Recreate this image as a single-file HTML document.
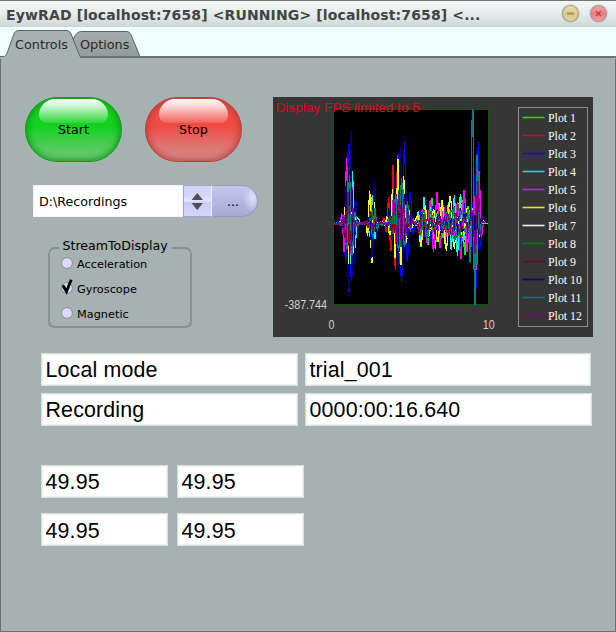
<!DOCTYPE html>
<html><head><meta charset="utf-8"><title>EywRAD</title>
<style>
html,body{margin:0;padding:0;}
body{width:616px;height:632px;position:relative;overflow:hidden;background:#a6b1b1;font-family:"DejaVu Sans","Liberation Sans",sans-serif;font-size:12px;color:#000;}
.abs{position:absolute;}
#titlebar{left:0;top:0;width:616px;height:27px;background:linear-gradient(#f4f6f6 0,#e6ecec 50%,#ccd6d6 100%);border-top:1px solid #6e7676;box-sizing:border-box;}
#title{left:6px;top:7px;letter-spacing:0.130px;font-weight:bold;font-size:14px;color:#444;white-space:nowrap;}
#tabstrip{left:0;top:27px;width:616px;height:29px;background:#f0fefe;}
#pane{left:0;top:56px;width:616px;height:576px;background:#a6b1b1;border:1px solid #6c7070;border-top:none;box-sizing:border-box;}
.tabtxt{font-size:12.800px;color:#2a2a2a;white-space:nowrap;}
.btn{border-radius:33px;box-sizing:border-box;}
.btn span{position:absolute;left:0;right:0;text-align:center;top:24px;font-size:12.67px;}
.fld{background:#fff;border:1px solid #dadfdf;box-shadow:inset 0 0 0 1px #eff2f2;box-sizing:border-box;font-family:"Liberation Sans",sans-serif;font-size:21.400px;line-height:32.600px;padding-left:3.500px;letter-spacing:0.150px;white-space:nowrap;overflow:hidden;}
</style></head><body>
<div id="titlebar" class="abs"></div>
<div id="title" class="abs">EywRAD [localhost:7658] &lt;RUNNING&gt; [localhost:7658] &lt;...</div>
<div id="tabstrip" class="abs"></div>
<div id="pane" class="abs"></div>
<svg class="abs" style="left:0;top:27px" width="616" height="32" viewBox="0 0 616 32">
  <defs><linearGradient id="tg" x1="0" y1="0" x2="0" y2="1"><stop offset="0" stop-color="#a4aeae"/><stop offset="1" stop-color="#929c9c"/></linearGradient></defs>
  <path d="M73,12 C76,7 77.500,4.500 82,4.500 L126,4.500 C129,4.500 130.500,6 131.500,9 L140,29.500 L78,29.500 Z" fill="url(#tg)" stroke="#5d6565" stroke-width="1"/>
  <path d="M0,29.500 L3,29.500 C5.500,29.500 6.500,28 7.500,25 L13.500,8 C14.500,5 16,3.500 19,3.500 L66,3.500 C69,3.500 70.500,5 71.500,8 L80,29.500 L616,29.500 L616,32 L0,32 Z" fill="#a6b1b1" stroke="none"/>
  <path d="M0,29.500 L3,29.500 C5.500,29.500 6.500,28 7.500,25 L13.500,8 C14.500,5 16,3.500 19,3.500 L66,3.500 C69,3.500 70.500,5 71.500,8 L80,29.500" fill="none" stroke="#5d6565" stroke-width="1"/>
  <rect x="80" y="29" width="536" height="2" fill="#6a7272"/>
</svg>
<div class="abs tabtxt" style="left:15px;top:37px">Controls</div>
<div class="abs tabtxt" style="left:80px;top:37px">Options</div>

<!-- window buttons -->
<svg class="abs" style="left:556px;top:1px" width="56" height="26" viewBox="0 0 56 26">
  <defs>
   <linearGradient id="gy" x1="0" y1="0" x2="0" y2="1"><stop offset="0" stop-color="#ecdfae"/><stop offset=".5" stop-color="#dcc98c"/><stop offset="1" stop-color="#e2d29c"/></linearGradient>
   <linearGradient id="gr" x1="0" y1="0" x2="0" y2="1"><stop offset="0" stop-color="#f4a8a8"/><stop offset=".5" stop-color="#ec7c80"/><stop offset="1" stop-color="#f0a0a0"/></linearGradient>
  </defs>
  <circle cx="14.500" cy="12.500" r="9.500" fill="#c4cccc" opacity=".6"/>
  <circle cx="14.500" cy="12.500" r="8" fill="url(#gy)" stroke="#a8a288" stroke-width="1.200"/>
  <rect x="11" y="11.500" width="7" height="2" fill="#a4945c"/>
  <circle cx="42.500" cy="12.500" r="9.500" fill="#c4cccc" opacity=".6"/>
  <circle cx="42.500" cy="12.500" r="8" fill="url(#gr)" stroke="#b09494" stroke-width="1.200"/>
  <path d="M40.200,10.200 L44.800,14.800 M44.800,10.200 L40.200,14.800" stroke="#b84850" stroke-width="1.600" fill="none"/>
</svg>

<!-- Start / Stop -->
<div class="abs btn" style="left:25px;top:97px;width:97px;height:65px;background:linear-gradient(#12d21f 0,#12d21f 45%,#4ccc56 75%,#74c878 100%);border:1px solid #0a9a14;box-shadow:inset 0 0 7px 1px #0a9414;">
  <div class="abs" style="left:13px;top:1px;width:69px;height:24px;border-radius:16px 16px 8px 8px;background:linear-gradient(rgba(255,255,255,.98) 0,rgba(255,255,255,.78) 30%,rgba(255,255,255,.12) 100%);"></div>
  <span>Start</span>
</div>
<div class="abs btn" style="left:145px;top:97px;width:97px;height:65px;background:linear-gradient(#f04c44 0,#f04c44 45%,#e07470 75%,#d48c88 100%);border:1px solid #b83c38;box-shadow:inset 0 0 7px 1px #b83c38;">
  <div class="abs" style="left:13px;top:1px;width:69px;height:24px;border-radius:16px 16px 8px 8px;background:linear-gradient(rgba(255,255,255,.98) 0,rgba(255,255,255,.78) 30%,rgba(255,255,255,.12) 100%);"></div>
  <span>Stop</span>
</div>

<!-- combo -->
<div class="abs" style="left:33px;top:185px;width:150px;height:32px;background:#fff;border:1px solid #f2f5f5;box-sizing:border-box;"></div>
<div class="abs" style="left:39px;top:194px;font-size:12.67px;">D:\Recordings</div>
<div class="abs" style="left:183px;top:185px;width:29px;height:32px;background:linear-gradient(#d2d2f6 0,#d6d6fa 35%,#e6e6ff 48%,#ccccf4 56%,#d6d6fa 100%);border:1px solid #a4a4d4;border-right:1px solid #ececff;box-sizing:border-box;"></div>
<svg class="abs" style="left:183px;top:185px" width="29" height="32" viewBox="0 0 29 32"><path d="M8.500,15 L14.200,8 L20,15 Z M8.500,18 L14.200,25 L20,18 Z" fill="#50505c"/></svg>
<div class="abs" style="left:212px;top:185px;width:46px;height:32px;border-radius:0 16px 16px 0;background:radial-gradient(ellipse 22% 45% at 90% 42%,rgba(226,226,255,.9) 0,rgba(226,226,255,0) 100%),linear-gradient(#c6c6ee 0,#b6b6e0 50%,#a8a8d2 100%);border:1px solid #9a9ac6;border-left:none;box-sizing:border-box;"></div>
<div class="abs" style="left:227px;top:194px;font-size:12.67px;">...</div>

<!-- group box -->
<div class="abs" style="left:48px;top:247px;width:144px;height:81px;border:2px solid #889292;border-radius:7px;box-sizing:border-box;"></div>
<div class="abs" style="left:58.500px;top:238px;padding:0 4px;background:#a6b1b1;font-size:12.600px;">StreamToDisplay</div>
<svg class="abs" style="left:58px;top:255px" width="20" height="70" viewBox="0 0 20 70">
  <circle cx="9" cy="8" r="5.400" fill="#dadaff" stroke="#8c8c98" stroke-width="1"/>
  <circle cx="9" cy="33" r="5.400" fill="#dadaff" stroke="#8c8c98" stroke-width="1"/>
  <circle cx="9" cy="58" r="5.400" fill="#dadaff" stroke="#8c8c98" stroke-width="1"/>
  <path d="M4.800,30.200 L8.500,36.500 L13.200,24.800" fill="none" stroke="#000" stroke-width="2.800"/>
</svg>
<div class="abs" style="left:77px;top:257.600px;font-size:11.300px;">Acceleration</div>
<div class="abs" style="left:77px;top:282.600px;font-size:11.300px;">Gyroscope</div>
<div class="abs" style="left:77px;top:307.600px;font-size:11.300px;">Magnetic</div>

<!-- chart -->
<div id="chart" class="abs" style="left:273px;top:97px;width:320px;height:240px;background:#363636;">
<svg width="320" height="240" viewBox="0 0 320 240" style="position:absolute;left:0;top:0">
  <rect x="60.500" y="12.500" width="155" height="195" fill="#000" stroke="#0a5a0a" stroke-width="1"/>
  <g id="waves" fill="none" stroke-width="1.25" stroke-linejoin="round" shape-rendering="crispEdges"><polyline points="61.0,127.4 61.5,125.8 62.0,125.0 62.5,125.9 63.0,127.2 63.5,126.2 64.0,127.1 64.5,127.5 65.0,126.5 65.5,126.2 66.0,126.2 66.5,126.3 67.0,124.8 67.5,125.3 68.0,126.8 68.5,127.3 69.0,126.6 69.5,126.8 70.0,126.4 70.5,127.7 71.0,123.0 71.5,119.9 72.0,120.4 72.5,119.4 73.0,125.6 73.5,130.2 74.0,139.3 74.5,143.2 75.0,139.4 75.5,131.7 76.0,120.3 76.5,108.9 77.0,103.8 77.5,107.2 78.0,115.9 78.5,130.3 79.0,139.7 79.5,141.2 80.0,140.3 80.5,133.4 81.0,125.0 81.5,121.3 82.0,120.4 82.5,121.5 83.0,123.9 83.5,124.9 84.0,127.2 84.5,128.5 85.0,126.3 85.5,127.5 86.0,125.8 86.5,127.0 87.0,125.1 87.5,126.4 88.0,127.4 88.5,127.0 89.0,126.9 89.5,126.1 90.0,127.1 90.5,127.4 91.0,126.1 91.5,126.0 92.0,125.2 92.5,127.6 93.0,126.5 93.5,127.2 94.0,126.0 94.5,126.1 95.0,123.9 95.5,124.1 96.0,125.8 96.5,127.7 97.0,128.8 97.5,133.9 98.0,134.6 98.5,133.9 99.0,129.7 99.5,121.0 100.0,114.9 100.5,112.4 101.0,116.0 101.5,120.4 102.0,128.0 102.5,131.0 103.0,132.6 103.5,131.2 104.0,129.9 104.5,125.3 105.0,124.8 105.5,124.6 106.0,125.7 106.5,127.0 107.0,127.3 107.5,126.3 108.0,125.8 108.5,126.1 109.0,127.1 109.5,127.1 110.0,127.4 110.5,125.6 111.0,126.7 111.5,126.7 112.0,126.3 112.5,124.0 113.0,123.2 113.5,123.8 114.0,125.7 114.5,125.4 115.0,127.3 115.5,130.1 116.0,130.8 116.5,131.5 117.0,129.0 117.5,127.0 118.0,119.8 118.5,116.7 119.0,111.2 119.5,111.7 120.0,117.3 120.5,126.4 121.0,132.6 121.5,138.0 122.0,143.4 122.5,141.6 123.0,136.4 123.5,127.3 124.0,114.0 124.5,102.4 125.0,97.5 125.5,97.6 126.0,108.3 126.5,121.9 127.0,133.9 127.5,142.6 128.0,144.8 128.5,143.0 129.0,138.8 129.5,128.8 130.0,118.2 130.5,108.0 131.0,104.5 131.5,107.6 132.0,114.1 132.5,122.8 133.0,130.2 133.5,131.6 134.0,133.9 134.5,133.3 135.0,129.5 135.5,128.6 136.0,124.3 136.5,122.3 137.0,120.9 137.5,121.7 138.0,124.4 138.5,126.5 139.0,126.7 139.5,126.4 140.0,126.3 140.5,126.2 141.0,127.8 141.5,127.4 142.0,126.2 142.5,125.2 143.0,125.9 143.5,123.7 144.0,123.9 144.5,120.9 145.0,122.0 145.5,123.2 146.0,124.8 146.5,126.7 147.0,132.1 147.5,135.5 148.0,136.1 148.5,135.0 149.0,132.8 149.5,131.1 150.0,125.6 150.5,118.3 151.0,112.6 151.5,112.8 152.0,109.2 152.5,114.4 153.0,121.0 153.5,125.9 154.0,134.2 154.5,142.8 155.0,148.1 155.5,147.5 156.0,142.2 156.5,137.7 157.0,128.7 157.5,120.8 158.0,109.7 158.5,103.7 159.0,101.2 159.5,106.5 160.0,109.3 160.5,121.6 161.0,132.3 161.5,141.2 162.0,144.8 162.5,151.3 163.0,143.8 163.5,140.7 164.0,133.1 164.5,125.8 165.0,116.8 165.5,106.9 166.0,109.7 166.5,106.7 167.0,112.2 167.5,120.5 168.0,125.6 168.5,132.1 169.0,136.9 169.5,137.8 170.0,141.0 170.5,137.2 171.0,134.4 171.5,128.9 172.0,123.3 172.5,119.1 173.0,117.6 173.5,115.7 174.0,116.7 174.5,120.8 175.0,123.8 175.5,126.5 176.0,131.6 176.5,135.2 177.0,135.7 177.5,134.9 178.0,135.7 178.5,130.6 179.0,125.1 179.5,119.9 180.0,114.3 180.5,110.8 181.0,111.4 181.5,115.4 182.0,119.1 182.5,124.3 183.0,133.7 183.5,142.2 184.0,145.2 184.5,149.7 185.0,145.5 185.5,141.7 186.0,131.1 186.5,121.0 187.0,108.6 187.5,102.9 188.0,100.2 188.5,102.9 189.0,102.9 189.5,115.3 190.0,128.0 190.5,141.0 191.0,146.6 191.5,157.6 192.0,157.4 192.5,147.5 193.0,137.1 193.5,125.6 194.0,117.5 194.5,110.8 195.0,109.3 195.5,110.1 196.0,113.5 196.5,120.1 197.0,123.0 197.5,124.6 198.0,126.0 198.5,127.4 199.0,135.0 199.5,138.0 200.0,138.8 200.5,138.2 201.0,130.7 201.5,117.7 202.0,105.4 202.5,99.2 203.0,104.1 203.5,115.1 204.0,128.8 204.5,136.6 205.0,138.6 205.5,135.5 206.0,129.8 206.5,125.7 207.0,123.5 207.5,121.1 208.0,123.4 208.5,124.3 209.0,126.0 209.5,126.4 210.0,126.8 210.5,126.3 211.0,126.7 211.5,126.5 212.0,126.2 212.5,126.3 213.0,126.5 213.5,126.3 214.0,126.4 214.5,126.5 215.0,126.2" stroke="#00ff00"/><polyline points="61.0,125.0 61.5,126.2 62.0,125.2 62.5,126.6 63.0,125.3 63.5,127.4 64.0,126.3 64.5,126.8 65.0,127.4 65.5,125.8 66.0,126.7 66.5,125.7 67.0,127.2 67.5,125.7 68.0,127.5 68.5,126.7 69.0,126.1 69.5,127.6 70.0,127.5 70.5,126.1 71.0,122.7 71.5,121.5 72.0,119.6 72.5,119.6 73.0,122.4 73.5,128.7 74.0,136.2 74.5,142.3 75.0,146.1 75.5,142.1 76.0,132.7 76.5,119.2 77.0,107.7 77.5,98.3 78.0,100.7 78.5,106.9 79.0,120.2 79.5,131.8 80.0,140.7 80.5,141.5 81.0,138.7 81.5,134.3 82.0,127.6 82.5,123.4 83.0,120.9 83.5,121.8 84.0,122.6 84.5,123.9 85.0,125.0 85.5,126.4 86.0,126.4 86.5,127.0 87.0,127.5 87.5,125.1 88.0,127.2 88.5,126.5 89.0,125.0 89.5,126.8 90.0,125.9 90.5,127.1 91.0,126.4 91.5,125.2 92.0,127.3 92.5,127.0 93.0,125.7 93.5,127.0 94.0,127.0 94.5,126.0 95.0,126.8 95.5,126.9 96.0,125.2 96.5,125.2 97.0,122.0 97.5,123.5 98.0,123.5 98.5,129.3 99.0,133.6 99.5,134.3 100.0,133.4 100.5,126.1 101.0,118.3 101.5,115.6 102.0,118.8 102.5,124.0 103.0,128.8 103.5,130.2 104.0,130.8 104.5,127.9 105.0,125.5 105.5,124.2 106.0,125.3 106.5,126.1 107.0,125.8 107.5,126.4 108.0,127.8 108.5,128.0 109.0,128.7 109.5,127.4 110.0,124.2 110.5,120.7 111.0,121.0 111.5,122.8 112.0,126.4 112.5,130.9 113.0,135.1 113.5,133.5 114.0,129.5 114.5,119.5 115.0,107.3 115.5,100.8 116.0,105.5 116.5,125.4 117.0,141.4 117.5,152.6 118.0,154.1 118.5,140.6 119.0,116.4 119.5,84.1 120.0,68.0 120.5,79.2 121.0,114.1 121.5,147.8 122.0,168.1 122.5,172.2 123.0,154.2 123.5,123.3 124.0,80.4 124.5,59.0 125.0,67.6 125.5,102.2 126.0,138.9 126.5,161.7 127.0,167.0 127.5,152.2 128.0,129.2 128.5,100.1 129.0,85.0 129.5,88.5 130.0,108.4 130.5,129.0 131.0,140.8 131.5,143.2 132.0,138.7 132.5,129.8 133.0,118.8 133.5,113.1 134.0,113.1 134.5,118.4 135.0,127.1 135.5,130.1 136.0,129.9 136.5,128.2 137.0,127.5 137.5,124.2 138.0,123.1 138.5,124.1 139.0,125.7 139.5,124.9 140.0,126.5 140.5,126.0 141.0,125.6 141.5,126.0 142.0,126.4 142.5,126.2 143.0,125.9 143.5,124.1 144.0,127.3 144.5,128.6 145.0,131.2 145.5,135.4 146.0,132.5 146.5,129.9 147.0,125.7 147.5,119.7 148.0,114.9 148.5,113.8 149.0,115.6 149.5,119.5 150.0,128.0 150.5,134.6 151.0,140.0 151.5,139.6 152.0,138.7 152.5,132.6 153.0,124.1 153.5,118.1 154.0,112.8 154.5,114.3 155.0,113.0 155.5,119.5 156.0,127.5 156.5,134.4 157.0,136.1 157.5,138.5 158.0,134.2 158.5,132.3 159.0,126.4 159.5,122.6 160.0,115.5 160.5,115.5 161.0,118.0 161.5,121.8 162.0,125.2 162.5,128.9 163.0,131.8 163.5,135.7 164.0,132.3 164.5,130.7 165.0,125.7 165.5,123.9 166.0,122.3 166.5,120.2 167.0,121.4 167.5,121.4 168.0,126.7 168.5,127.7 169.0,132.9 169.5,133.7 170.0,133.0 170.5,129.4 171.0,126.5 171.5,122.5 172.0,121.9 172.5,118.1 173.0,116.5 173.5,121.6 174.0,124.0 174.5,131.3 175.0,134.4 175.5,138.7 176.0,136.5 176.5,133.3 177.0,127.5 177.5,120.6 178.0,117.1 178.5,110.0 179.0,113.2 179.5,116.6 180.0,123.7 180.5,133.2 181.0,140.1 181.5,141.2 182.0,141.4 182.5,139.8 183.0,129.5 183.5,119.9 184.0,111.2 184.5,107.3 185.0,107.8 185.5,114.4 186.0,121.8 186.5,131.1 187.0,140.6 187.5,142.5 188.0,143.4 188.5,140.1 189.0,131.3 189.5,122.9 190.0,115.8 190.5,111.6 191.0,115.3 191.5,118.5 192.0,124.6 192.5,128.3 193.0,131.9 193.5,134.5 194.0,132.7 194.5,131.4 195.0,127.0 195.5,123.4 196.0,121.2 196.5,120.3 197.0,121.3 197.5,124.2 198.0,127.7 198.5,132.5 199.0,136.1 199.5,139.1 200.0,135.0 200.5,127.5 201.0,115.6 201.5,104.2 202.0,99.0 202.5,100.4 203.0,112.8 203.5,125.3 204.0,135.5 204.5,140.2 205.0,139.4 205.5,136.1 206.0,128.7 206.5,125.2 207.0,123.5 207.5,123.1 208.0,122.2 208.5,125.2 209.0,125.8 209.5,126.4 210.0,126.8 210.5,126.4 211.0,126.4 211.5,126.4 212.0,126.1 212.5,126.1 213.0,126.4 213.5,126.3 214.0,126.5 214.5,126.3 215.0,126.3" stroke="#ff0000"/><polyline points="61.0,126.6 61.5,125.7 62.0,126.7 62.5,125.2 63.0,125.6 63.5,125.2 64.0,126.7 64.5,127.4 65.0,126.8 65.5,126.5 66.0,127.1 66.5,128.3 67.0,127.0 67.5,127.3 68.0,125.4 68.5,122.6 69.0,119.4 69.5,118.1 70.0,117.2 70.5,120.6 71.0,128.2 71.5,142.1 72.0,155.6 72.5,165.0 73.0,162.7 73.5,147.8 74.0,122.9 74.5,90.6 75.0,61.0 75.5,47.5 76.0,56.3 76.5,84.5 77.0,123.7 77.5,156.9 78.0,179.0 78.5,183.8 79.0,174.0 79.5,153.9 80.0,132.1 80.5,115.1 81.0,104.7 81.5,104.5 82.0,110.7 82.5,118.9 83.0,125.3 83.5,127.7 84.0,129.8 84.5,130.4 85.0,127.2 85.5,127.9 86.0,127.4 86.5,125.9 87.0,126.4 87.5,125.0 88.0,125.9 88.5,126.5 89.0,126.9 89.5,125.3 90.0,125.3 90.5,127.2 91.0,126.7 91.5,124.8 92.0,126.6 92.5,125.2 93.0,127.2 93.5,127.3 94.0,129.0 94.5,131.3 95.0,132.8 95.5,130.6 96.0,127.1 96.5,118.9 97.0,109.2 97.5,103.9 98.0,108.5 98.5,117.3 99.0,130.9 99.5,141.0 100.0,147.2 100.5,144.4 101.0,136.6 101.5,129.6 102.0,123.7 102.5,121.6 103.0,120.6 103.5,124.2 104.0,124.3 104.5,127.0 105.0,126.0 105.5,126.2 106.0,126.0 106.5,126.8 107.0,125.4 107.5,126.1 108.0,125.7 108.5,125.4 109.0,127.2 109.5,125.9 110.0,127.3 110.5,126.3 111.0,125.4 111.5,126.1 112.0,126.1 112.5,124.8 113.0,126.4 113.5,125.5 114.0,124.7 114.5,123.2 115.0,126.2 115.5,127.4 116.0,129.7 116.5,130.2 117.0,132.2 117.5,130.1 118.0,126.0 118.5,120.0 119.0,111.7 119.5,107.3 120.0,104.1 120.5,111.0 121.0,124.1 121.5,136.1 122.0,147.7 122.5,156.4 123.0,155.9 123.5,147.4 124.0,127.7 124.5,99.6 125.0,70.7 125.5,56.5 126.0,60.1 126.5,83.6 127.0,124.4 127.5,152.8 128.0,176.7 128.5,184.8 129.0,179.0 129.5,156.5 130.0,128.3 130.5,85.0 131.0,54.2 131.5,45.5 132.0,60.0 132.5,88.3 133.0,126.8 133.5,148.8 134.0,163.5 134.5,164.4 135.0,155.5 135.5,140.5 136.0,124.2 136.5,104.5 137.0,95.5 137.5,96.2 138.0,103.6 138.5,116.3 139.0,127.6 139.5,131.8 140.0,136.2 140.5,133.9 141.0,131.2 141.5,128.0 142.0,126.3 142.5,122.9 143.0,123.1 143.5,123.2 144.0,125.1 144.5,129.2 145.0,131.1 145.5,131.9 146.0,129.6 146.5,126.6 147.0,121.7 147.5,120.1 148.0,115.5 148.5,119.4 149.0,120.6 149.5,126.6 150.0,132.1 150.5,135.9 151.0,139.6 151.5,137.8 152.0,133.8 152.5,125.4 153.0,118.6 153.5,114.1 154.0,112.2 154.5,112.5 155.0,119.1 155.5,125.6 156.0,132.9 156.5,138.5 157.0,144.4 157.5,139.4 158.0,137.1 158.5,128.8 159.0,118.6 159.5,113.7 160.0,109.0 160.5,110.0 161.0,115.9 161.5,123.6 162.0,132.5 162.5,138.3 163.0,138.8 163.5,137.9 164.0,135.9 164.5,127.9 165.0,123.3 165.5,116.4 166.0,114.9 166.5,114.6 167.0,120.7 167.5,125.5 168.0,127.6 168.5,133.8 169.0,133.5 169.5,134.3 170.0,133.5 170.5,129.5 171.0,123.8 171.5,122.3 172.0,119.9 172.5,121.3 173.0,121.3 173.5,123.9 174.0,128.2 174.5,129.5 175.0,133.6 175.5,131.4 176.0,132.9 176.5,127.8 177.0,124.8 177.5,122.0 178.0,119.1 178.5,116.3 179.0,117.0 179.5,121.4 180.0,127.4 180.5,134.1 181.0,138.9 181.5,142.6 182.0,140.1 182.5,132.9 183.0,125.7 183.5,117.7 184.0,113.1 184.5,108.8 185.0,106.9 185.5,114.2 186.0,125.4 186.5,133.5 187.0,142.8 187.5,145.9 188.0,147.9 188.5,140.2 189.0,130.1 189.5,118.8 190.0,108.4 190.5,106.4 191.0,107.0 191.5,114.1 192.0,123.5 192.5,131.3 193.0,137.6 193.5,141.8 194.0,138.1 194.5,134.6 195.0,130.2 195.5,123.2 196.0,119.5 196.5,117.7 197.0,121.3 197.5,124.2 198.0,131.5 198.5,135.1 199.0,136.5 199.5,128.1 200.0,110.5 200.5,89.3 201.0,77.5 201.5,94.8 202.0,131.4 202.5,168.4 203.0,191.2 203.5,187.4 204.0,154.9 204.5,102.9 205.0,55.5 205.5,45.2 206.0,70.1 206.5,110.7 207.0,140.2 207.5,151.6 208.0,147.9 208.5,138.4 209.0,127.3 209.5,120.2 210.0,119.1 210.5,121.3 211.0,124.7 211.5,126.7 212.0,127.0 212.5,126.7 213.0,126.8 213.5,126.6 214.0,126.5 214.5,126.4 215.0,126.2" stroke="#0000ff"/><polyline points="61.0,126.7 61.5,126.4 62.0,125.4 62.5,126.2 63.0,126.6 63.5,127.3 64.0,126.8 64.5,127.0 65.0,126.3 65.5,126.6 66.0,127.6 66.5,125.1 67.0,125.9 67.5,126.6 68.0,125.7 68.5,126.0 69.0,125.7 69.5,128.2 70.0,128.8 70.5,129.6 71.0,130.2 71.5,128.5 72.0,124.4 72.5,119.9 73.0,111.4 73.5,106.2 74.0,105.5 74.5,113.3 75.0,127.6 75.5,148.2 76.0,162.6 76.5,172.4 77.0,166.2 77.5,146.7 78.0,122.9 78.5,94.6 79.0,77.1 79.5,74.5 80.0,86.9 80.5,108.6 81.0,128.3 81.5,143.8 82.0,151.0 82.5,146.7 83.0,139.5 83.5,132.4 84.0,124.5 84.5,120.4 85.0,121.7 85.5,122.1 86.0,122.6 86.5,124.9 87.0,125.7 87.5,126.2 88.0,126.6 88.5,127.0 89.0,126.9 89.5,126.3 90.0,126.1 90.5,126.7 91.0,126.4 91.5,126.8 92.0,126.9 92.5,125.5 93.0,126.4 93.5,124.4 94.0,124.5 94.5,125.2 95.0,126.0 95.5,130.6 96.0,135.4 96.5,139.0 97.0,137.1 97.5,132.3 98.0,122.5 98.5,111.3 99.0,100.1 99.5,99.1 100.0,104.5 100.5,115.6 101.0,130.0 101.5,138.7 102.0,141.5 102.5,141.0 103.0,134.9 103.5,128.9 104.0,126.6 104.5,125.4 105.0,124.7 105.5,125.4 106.0,125.6 106.5,126.7 107.0,126.4 107.5,127.4 108.0,125.5 108.5,126.1 109.0,125.8 109.5,124.6 110.0,126.2 110.5,124.7 111.0,125.7 111.5,127.2 112.0,127.1 112.5,128.0 113.0,128.1 113.5,125.4 114.0,123.0 114.5,122.4 115.0,120.4 115.5,120.6 116.0,123.4 116.5,129.2 117.0,133.9 117.5,136.4 118.0,136.9 118.5,133.2 119.0,127.7 119.5,113.8 120.0,101.4 120.5,96.8 121.0,101.5 121.5,117.9 122.0,134.4 122.5,148.3 123.0,156.7 123.5,153.8 124.0,141.1 124.5,121.8 125.0,94.2 125.5,77.2 126.0,74.6 126.5,89.8 127.0,118.2 127.5,139.0 128.0,156.1 128.5,158.7 129.0,154.8 129.5,138.5 130.0,119.3 130.5,98.2 131.0,90.7 131.5,91.8 132.0,106.6 132.5,124.2 133.0,134.2 133.5,140.5 134.0,141.3 134.5,136.6 135.0,129.0 135.5,123.6 136.0,117.1 136.5,116.2 137.0,117.6 137.5,122.1 138.0,125.3 138.5,129.0 139.0,129.4 139.5,128.2 140.0,127.5 140.5,126.0 141.0,126.7 141.5,124.5 142.0,126.7 142.5,126.1 143.0,128.3 143.5,125.6 144.0,123.0 144.5,120.4 145.0,115.2 145.5,114.4 146.0,119.6 146.5,126.8 147.0,137.2 147.5,140.9 148.0,149.7 148.5,144.0 149.0,136.8 149.5,128.7 150.0,116.8 150.5,104.2 151.0,100.1 151.5,107.4 152.0,113.1 152.5,125.4 153.0,136.2 153.5,143.6 154.0,144.6 154.5,145.1 155.0,139.0 155.5,129.9 156.0,120.8 156.5,112.2 157.0,107.0 157.5,113.1 158.0,116.9 158.5,122.7 159.0,131.2 159.5,138.3 160.0,136.8 160.5,141.0 161.0,134.8 161.5,128.8 162.0,122.3 162.5,120.3 163.0,116.4 163.5,116.6 164.0,120.8 164.5,125.2 165.0,129.5 165.5,133.9 166.0,135.2 166.5,135.3 167.0,133.5 167.5,128.4 168.0,123.8 168.5,118.1 169.0,112.9 169.5,114.5 170.0,116.4 170.5,124.2 171.0,130.8 171.5,137.5 172.0,143.3 172.5,139.0 173.0,137.3 173.5,129.9 174.0,122.4 174.5,115.5 175.0,108.9 175.5,106.0 176.0,113.0 176.5,119.5 177.0,132.3 177.5,142.5 178.0,151.7 178.5,152.0 179.0,142.7 179.5,135.0 180.0,120.2 180.5,108.9 181.0,101.3 181.5,99.1 182.0,107.3 182.5,114.3 183.0,130.4 183.5,144.7 184.0,154.2 184.5,158.2 185.0,151.4 185.5,134.9 186.0,123.2 186.5,110.2 187.0,100.7 187.5,97.9 188.0,109.4 188.5,117.0 189.0,129.3 189.5,136.5 190.0,143.8 190.5,145.8 191.0,142.1 191.5,133.0 192.0,124.1 192.5,117.5 193.0,114.7 193.5,115.7 194.0,119.7 194.5,122.3 195.0,126.2 195.5,131.1 196.0,133.4 196.5,132.4 197.0,130.4 197.5,125.9 198.0,121.5 198.5,114.4 199.0,110.9 199.5,115.8 200.0,126.0 200.5,137.5 201.0,149.9 201.5,154.9 202.0,147.3 202.5,131.5 203.0,106.6 203.5,85.3 204.0,80.5 204.5,93.2 205.0,114.7 205.5,134.0 206.0,141.5 206.5,142.6 207.0,136.6 207.5,131.6 208.0,124.0 208.5,122.7 209.0,122.1 209.5,123.3 210.0,125.0 210.5,126.3 211.0,126.5 211.5,126.6 212.0,126.7 212.5,126.1 213.0,126.6 213.5,126.4 214.0,126.3 214.5,126.3 215.0,126.2" stroke="#00ffff"/><polyline points="61.0,126.4 61.5,125.1 62.0,126.3 62.5,126.8 63.0,127.2 63.5,126.9 64.0,126.2 64.5,126.6 65.0,127.2 65.5,126.5 66.0,127.8 66.5,127.6 67.0,126.3 67.5,124.7 68.0,120.8 68.5,116.7 69.0,118.1 69.5,122.1 70.0,134.2 70.5,146.0 71.0,154.9 71.5,153.2 72.0,137.5 72.5,109.2 73.0,77.8 73.5,61.6 74.0,70.4 74.5,100.8 75.0,144.2 75.5,179.5 76.0,193.9 76.5,182.4 77.0,149.8 77.5,115.3 78.0,87.9 78.5,80.5 79.0,92.3 79.5,110.8 80.0,127.7 80.5,138.0 81.0,139.8 81.5,137.0 82.0,130.6 82.5,126.9 83.0,122.6 83.5,124.0 84.0,124.6 84.5,125.2 85.0,126.2 85.5,126.4 86.0,127.0 86.5,127.6 87.0,125.9 87.5,125.5 88.0,126.9 88.5,126.2 89.0,126.6 89.5,127.2 90.0,125.3 90.5,126.9 91.0,127.3 91.5,125.5 92.0,126.9 92.5,125.9 93.0,125.6 93.5,127.3 94.0,125.9 94.5,125.1 95.0,125.4 95.5,124.2 96.0,122.9 96.5,121.9 97.0,126.3 97.5,131.5 98.0,137.1 98.5,141.3 99.0,139.8 99.5,135.2 100.0,122.7 100.5,111.0 101.0,106.2 101.5,107.1 102.0,114.9 102.5,124.6 103.0,131.3 103.5,136.1 104.0,134.9 104.5,131.3 105.0,129.5 105.5,127.4 106.0,126.1 106.5,124.8 107.0,126.0 107.5,126.4 108.0,126.3 108.5,126.6 109.0,126.8 109.5,126.9 110.0,127.4 110.5,126.2 111.0,127.2 111.5,126.1 112.0,126.2 112.5,124.6 113.0,123.5 113.5,121.9 114.0,121.7 114.5,122.6 115.0,127.4 115.5,130.5 116.0,132.2 116.5,135.0 117.0,132.4 117.5,128.7 118.0,120.4 118.5,111.1 119.0,102.5 119.5,101.6 120.0,111.1 120.5,123.3 121.0,137.2 121.5,146.7 122.0,151.1 122.5,147.7 123.0,138.7 123.5,119.3 124.0,96.3 124.5,81.6 125.0,79.8 125.5,94.0 126.0,115.7 126.5,138.6 127.0,151.9 127.5,157.6 128.0,155.1 128.5,141.4 129.0,127.0 129.5,105.5 130.0,92.6 130.5,91.5 131.0,100.3 131.5,115.8 132.0,131.5 132.5,138.9 133.0,142.1 133.5,139.0 134.0,134.3 134.5,126.8 135.0,120.5 135.5,115.6 136.0,116.3 136.5,118.3 137.0,122.5 137.5,126.6 138.0,128.9 138.5,127.8 139.0,129.7 139.5,128.4 140.0,126.0 140.5,124.9 141.0,125.4 141.5,125.0 142.0,126.7 142.5,125.7 143.0,126.0 143.5,123.0 144.0,123.7 144.5,123.2 145.0,124.8 145.5,126.8 146.0,130.5 146.5,134.0 147.0,137.9 147.5,138.8 148.0,133.5 148.5,129.8 149.0,123.1 149.5,118.5 150.0,112.7 150.5,113.7 151.0,113.0 151.5,117.6 152.0,122.7 152.5,130.8 153.0,138.8 153.5,145.0 154.0,145.7 154.5,146.5 155.0,136.6 155.5,128.7 156.0,116.6 156.5,108.0 157.0,104.7 157.5,103.6 158.0,107.9 158.5,115.2 159.0,126.4 159.5,138.5 160.0,151.2 160.5,154.8 161.0,149.5 161.5,143.9 162.0,135.0 162.5,122.3 163.0,110.1 163.5,101.6 164.0,95.4 164.5,100.7 165.0,109.1 165.5,120.6 166.0,132.0 166.5,143.0 167.0,151.0 167.5,146.9 168.0,141.1 168.5,135.0 169.0,128.3 169.5,120.2 170.0,112.6 170.5,108.4 171.0,110.9 171.5,114.6 172.0,120.5 172.5,127.9 173.0,132.8 173.5,136.7 174.0,140.1 174.5,135.6 175.0,134.1 175.5,129.4 176.0,124.8 176.5,120.4 177.0,116.0 177.5,114.0 178.0,115.5 178.5,117.8 179.0,124.1 179.5,129.4 180.0,134.4 180.5,140.7 181.0,146.6 181.5,141.0 182.0,135.7 182.5,128.6 183.0,118.3 183.5,111.2 184.0,107.1 184.5,105.5 185.0,107.3 185.5,114.6 186.0,126.6 186.5,138.0 187.0,152.8 187.5,159.1 188.0,161.9 188.5,155.7 189.0,139.1 189.5,123.9 190.0,108.3 190.5,95.6 191.0,93.3 191.5,98.7 192.0,102.4 192.5,118.4 193.0,132.7 193.5,146.6 194.0,154.5 194.5,150.8 195.0,144.2 195.5,136.4 196.0,127.6 196.5,122.6 197.0,117.6 197.5,117.3 198.0,122.1 198.5,125.2 199.0,126.4 199.5,125.9 200.0,115.4 200.5,106.9 201.0,99.2 201.5,101.1 202.0,117.0 202.5,141.4 203.0,162.0 203.5,172.1 204.0,167.3 204.5,149.7 205.0,120.3 205.5,89.4 206.0,74.6 206.5,79.7 207.0,96.1 207.5,119.9 208.0,132.5 208.5,139.8 209.0,137.8 209.5,133.1 210.0,129.1 210.5,126.0 211.0,124.2 211.5,124.5 212.0,125.0 212.5,125.8 213.0,126.5 213.5,126.2 214.0,126.3 214.5,126.4 215.0,126.0" stroke="#ff00ff"/><polyline points="61.0,126.5 61.5,125.9 62.0,126.7 62.5,125.5 63.0,125.4 63.5,125.9 64.0,126.8 64.5,125.5 65.0,126.8 65.5,127.3 66.0,125.8 66.5,127.2 67.0,125.3 67.5,124.9 68.0,126.3 68.5,127.5 69.0,128.7 69.5,130.6 70.0,129.0 70.5,129.3 71.0,125.5 71.5,117.4 72.0,110.9 72.5,107.8 73.0,111.5 73.5,122.9 74.0,141.1 74.5,159.7 75.0,168.5 75.5,164.2 76.0,145.0 76.5,114.3 77.0,82.8 77.5,65.4 78.0,70.0 78.5,91.7 79.0,124.0 79.5,148.5 80.0,161.1 80.5,160.9 81.0,148.9 81.5,135.5 82.0,122.1 82.5,114.3 83.0,113.2 83.5,117.4 84.0,122.4 84.5,125.3 85.0,127.9 85.5,127.4 86.0,128.5 86.5,126.9 87.0,126.7 87.5,127.0 88.0,126.7 88.5,127.2 89.0,127.0 89.5,126.1 90.0,125.1 90.5,126.7 91.0,125.3 91.5,126.4 92.0,124.1 92.5,125.5 93.0,127.0 93.5,128.8 94.0,134.9 94.5,137.9 95.0,133.4 95.5,121.0 96.0,105.4 96.5,94.6 97.0,97.4 97.5,118.3 98.0,145.8 98.5,164.4 99.0,166.1 99.5,148.4 100.0,124.3 100.5,109.1 101.0,105.4 101.5,111.3 102.0,121.9 102.5,129.8 103.0,130.5 103.5,129.6 104.0,129.1 104.5,127.0 105.0,125.3 105.5,126.1 106.0,126.2 106.5,126.9 107.0,125.1 107.5,124.9 108.0,126.7 108.5,126.6 109.0,127.0 109.5,126.5 110.0,126.3 110.5,126.2 111.0,127.6 111.5,128.1 112.0,127.1 112.5,125.0 113.0,124.0 113.5,120.1 114.0,120.5 114.5,122.4 115.0,125.2 115.5,129.7 116.0,135.6 116.5,137.7 117.0,137.4 117.5,134.0 118.0,124.6 118.5,111.1 119.0,99.0 119.5,93.1 120.0,98.4 120.5,116.0 121.0,134.4 121.5,150.9 122.0,160.7 122.5,160.1 123.0,149.3 123.5,130.2 124.0,98.5 124.5,71.3 125.0,62.5 125.5,70.1 126.0,95.8 126.5,130.5 127.0,151.9 127.5,166.7 128.0,167.2 128.5,155.8 129.0,135.9 129.5,112.0 130.0,87.3 130.5,79.6 131.0,84.1 131.5,102.7 132.0,122.9 132.5,136.8 133.0,145.2 133.5,143.9 134.0,140.5 134.5,132.3 135.0,124.9 135.5,116.6 136.0,113.1 136.5,113.6 137.0,118.1 137.5,124.7 138.0,127.3 138.5,129.7 139.0,130.1 139.5,130.0 140.0,127.3 140.5,128.1 141.0,126.4 141.5,124.0 142.0,125.6 142.5,122.2 143.0,122.1 143.5,119.4 144.0,119.3 144.5,117.5 145.0,119.4 145.5,122.3 146.0,129.6 146.5,136.2 147.0,143.3 147.5,147.4 148.0,148.5 148.5,145.3 149.0,142.6 149.5,131.8 150.0,125.1 150.5,118.4 151.0,112.9 151.5,110.3 152.0,110.4 152.5,109.0 153.0,113.8 153.5,120.1 154.0,124.2 154.5,130.2 155.0,133.8 155.5,136.1 156.0,136.8 156.5,138.3 157.0,133.3 157.5,132.5 158.0,129.8 158.5,126.5 159.0,122.5 159.5,116.8 160.0,115.2 160.5,112.8 161.0,113.2 161.5,118.9 162.0,120.4 162.5,125.1 163.0,131.6 163.5,136.0 164.0,141.2 164.5,142.9 165.0,144.9 165.5,142.5 166.0,135.2 166.5,128.8 167.0,123.8 167.5,116.3 168.0,110.9 168.5,107.5 169.0,103.5 169.5,105.2 170.0,111.7 170.5,119.6 171.0,125.5 171.5,135.3 172.0,144.9 172.5,151.4 173.0,152.0 173.5,153.5 174.0,148.1 174.5,140.4 175.0,130.4 175.5,118.7 176.0,107.9 176.5,106.4 177.0,99.2 177.5,102.2 178.0,104.6 178.5,108.5 179.0,119.7 179.5,129.0 180.0,136.2 180.5,142.7 181.0,149.8 181.5,151.1 182.0,144.7 182.5,139.9 183.0,135.1 183.5,128.8 184.0,119.7 184.5,115.3 185.0,111.3 185.5,106.8 186.0,111.0 186.5,113.0 187.0,116.3 187.5,123.9 188.0,128.3 188.5,132.6 189.0,137.9 189.5,140.2 190.0,137.9 190.5,137.0 191.0,135.7 191.5,129.0 192.0,124.9 192.5,122.3 193.0,119.3 193.5,113.6 194.0,111.8 194.5,115.7 195.0,118.9 195.5,120.8 196.0,124.2 196.5,128.7 197.0,134.0 197.5,132.8 198.0,134.2 198.5,127.9 199.0,119.2 199.5,115.1 200.0,112.8 200.5,120.8 201.0,135.2 201.5,145.6 202.0,155.3 202.5,152.1 203.0,141.7 203.5,120.9 204.0,95.6 204.5,84.2 205.0,87.4 205.5,101.0 206.0,120.8 206.5,134.8 207.0,141.0 207.5,138.6 208.0,133.0 208.5,129.8 209.0,125.3 209.5,123.4 210.0,123.4 210.5,124.8 211.0,125.3 211.5,126.0 212.0,126.1 212.5,126.3 213.0,126.6 213.5,126.6 214.0,126.1 214.5,126.3 215.0,126.2" stroke="#ffff00"/><polyline points="61.0,125.8 61.5,126.3 62.0,125.4 62.5,125.5 63.0,126.7 63.5,125.6 64.0,125.0 64.5,126.5 65.0,125.1 65.5,125.3 66.0,126.9 66.5,127.4 67.0,125.1 67.5,127.3 68.0,127.5 68.5,127.4 69.0,125.3 69.5,125.1 70.0,126.1 70.5,125.4 71.0,126.8 71.5,127.3 72.0,128.6 72.5,127.6 73.0,125.4 73.5,123.5 74.0,123.6 74.5,121.5 75.0,123.8 75.5,128.7 76.0,131.1 76.5,131.4 77.0,132.0 77.5,127.5 78.0,121.7 78.5,120.3 79.0,120.7 79.5,121.4 80.0,127.8 80.5,130.3 81.0,129.5 81.5,130.1 82.0,128.0 82.5,126.2 83.0,124.0 83.5,125.0 84.0,125.1 84.5,125.8 85.0,127.6 85.5,126.4 86.0,127.6 86.5,127.3 87.0,126.9 87.5,125.1 88.0,125.4 88.5,126.0 89.0,126.0 89.5,126.8 90.0,126.1 90.5,125.9 91.0,125.7 91.5,127.5 92.0,126.5 92.5,126.2 93.0,126.0 93.5,125.8 94.0,126.2 94.5,127.4 95.0,125.5 95.5,127.1 96.0,126.4 96.5,126.8 97.0,126.4 97.5,125.4 98.0,125.9 98.5,126.3 99.0,128.0 99.5,129.6 100.0,129.6 100.5,128.1 101.0,125.9 101.5,122.6 102.0,122.0 102.5,122.9 103.0,126.1 103.5,126.9 104.0,129.0 104.5,126.5 105.0,125.6 105.5,126.5 106.0,127.2 106.5,125.4 107.0,125.4 107.5,125.6 108.0,125.9 108.5,125.8 109.0,127.3 109.5,125.7 110.0,125.1 110.5,127.3 111.0,126.8 111.5,125.5 112.0,125.9 112.5,126.3 113.0,127.1 113.5,127.0 114.0,124.5 114.5,125.2 115.0,126.9 115.5,126.7 116.0,128.1 116.5,127.6 117.0,126.8 117.5,127.6 118.0,126.0 118.5,124.5 119.0,124.4 119.5,122.7 120.0,124.2 120.5,125.3 121.0,127.1 121.5,128.7 122.0,129.3 122.5,130.5 123.0,128.3 123.5,126.6 124.0,122.6 124.5,120.6 125.0,120.1 125.5,121.5 126.0,124.6 126.5,127.8 127.0,128.9 127.5,132.0 128.0,131.5 128.5,127.5 129.0,127.0 129.5,122.8 130.0,122.4 130.5,122.6 131.0,123.6 131.5,124.3 132.0,126.4 132.5,127.2 133.0,129.2 133.5,128.0 134.0,126.0 134.5,126.8 135.0,124.3 135.5,124.5 136.0,125.6 136.5,125.5 137.0,126.9 137.5,126.3 138.0,125.4 138.5,125.4 139.0,126.5 139.5,127.5 140.0,127.3 140.5,127.2 141.0,126.9 141.5,125.5 142.0,127.3 142.5,125.1 143.0,126.5 143.5,125.8 144.0,125.3 144.5,125.2 145.0,126.8 145.5,126.6 146.0,126.7 146.5,126.8 147.0,126.0 147.5,126.6 148.0,127.6 148.5,126.4 149.0,125.8 149.5,125.6 150.0,125.4 150.5,126.0 151.0,125.1 151.5,125.2 152.0,126.8 152.5,127.1 153.0,127.5 153.5,127.4 154.0,128.7 154.5,127.4 155.0,124.4 155.5,123.9 156.0,123.9 156.5,125.1 157.0,126.3 157.5,125.0 158.0,128.8 158.5,128.4 159.0,128.0 159.5,129.0 160.0,126.8 160.5,125.9 161.0,124.0 161.5,124.3 162.0,124.6 162.5,124.0 163.0,125.3 163.5,126.9 164.0,127.6 164.5,128.2 165.0,128.4 165.5,127.5 166.0,127.1 166.5,124.7 167.0,123.9 167.5,123.5 168.0,125.0 168.5,124.9 169.0,127.1 169.5,127.7 170.0,127.9 170.5,127.7 171.0,127.2 171.5,126.9 172.0,125.4 172.5,124.2 173.0,124.6 173.5,125.3 174.0,126.2 174.5,125.1 175.0,125.8 175.5,126.9 176.0,128.7 176.5,128.6 177.0,125.6 177.5,125.3 178.0,126.3 178.5,126.1 179.0,125.1 179.5,125.8 180.0,126.9 180.5,127.9 181.0,127.3 181.5,128.3 182.0,127.6 182.5,126.4 183.0,127.0 183.5,125.0 184.0,123.6 184.5,123.1 185.0,125.0 185.5,124.7 186.0,126.5 186.5,128.1 187.0,129.5 187.5,130.4 188.0,129.5 188.5,127.0 189.0,125.5 189.5,123.1 190.0,123.3 190.5,123.0 191.0,124.7 191.5,125.5 192.0,127.1 192.5,129.1 193.0,129.8 193.5,129.7 194.0,128.6 194.5,126.4 195.0,124.7 195.5,122.4 196.0,122.7 196.5,123.1 197.0,125.4 197.5,127.5 198.0,128.2 198.5,128.7 199.0,129.6 199.5,127.4 200.0,126.8 200.5,122.9 201.0,119.7 201.5,119.0 202.0,121.3 202.5,124.9 203.0,127.9 203.5,128.8 204.0,130.9 204.5,129.5 205.0,127.4 205.5,127.4 206.0,125.5 206.5,125.2 207.0,126.3 207.5,125.0 208.0,127.2 208.5,127.5 209.0,126.4 209.5,126.2 210.0,126.3 210.5,126.6 211.0,126.4 211.5,126.5 212.0,126.3 212.5,126.6 213.0,126.0 213.5,126.3 214.0,126.2 214.5,126.5 215.0,126.3" stroke="#ffffff"/><polyline points="61.0,127.4 61.5,125.1 62.0,126.2 62.5,126.2 63.0,127.3 63.5,126.0 64.0,125.9 64.5,125.9 65.0,126.3 65.5,126.2 66.0,127.0 66.5,127.1 67.0,124.9 67.5,125.5 68.0,124.9 68.5,126.4 69.0,127.7 69.5,127.6 70.0,127.1 70.5,128.2 71.0,129.1 71.5,125.4 72.0,123.5 72.5,120.0 73.0,117.6 73.5,116.6 74.0,120.4 74.5,128.3 75.0,136.8 75.5,145.5 76.0,148.6 76.5,143.4 77.0,132.3 77.5,115.8 78.0,102.7 78.5,99.0 79.0,102.5 79.5,113.0 80.0,127.2 80.5,135.7 81.0,140.4 81.5,139.0 82.0,134.2 82.5,128.9 83.0,124.9 83.5,123.0 84.0,122.1 84.5,122.8 85.0,125.9 85.5,125.2 86.0,127.5 86.5,128.2 87.0,127.2 87.5,127.8 88.0,125.8 88.5,126.9 89.0,125.3 89.5,125.2 90.0,127.4 90.5,125.9 91.0,125.6 91.5,125.0 92.0,126.4 92.5,125.6 93.0,125.4 93.5,125.6 94.0,126.9 94.5,125.7 95.0,123.7 95.5,123.3 96.0,124.9 96.5,126.3 97.0,130.8 97.5,133.4 98.0,135.1 98.5,129.4 99.0,121.3 99.5,116.2 100.0,113.4 100.5,117.3 101.0,127.7 101.5,134.4 102.0,135.0 102.5,132.6 103.0,128.0 103.5,125.2 104.0,124.4 104.5,124.5 105.0,125.0 105.5,126.0 106.0,126.0 106.5,126.3 107.0,125.6 107.5,125.3 108.0,125.6 108.5,127.1 109.0,127.4 109.5,127.4 110.0,126.4 110.5,124.9 111.0,125.8 111.5,126.6 112.0,125.0 112.5,128.1 113.0,127.9 113.5,128.2 114.0,129.0 114.5,126.3 115.0,123.1 115.5,120.8 116.0,120.9 116.5,120.3 117.0,124.2 117.5,130.9 118.0,133.7 118.5,134.9 119.0,133.9 119.5,128.2 120.0,116.8 120.5,108.3 121.0,105.6 121.5,110.2 122.0,125.4 122.5,137.5 123.0,146.3 123.5,146.7 124.0,138.2 124.5,125.9 125.0,104.3 125.5,93.6 126.0,94.7 126.5,108.3 127.0,127.8 127.5,142.2 128.0,149.2 128.5,148.0 129.0,137.3 129.5,123.5 130.0,107.9 130.5,100.6 131.0,104.8 131.5,114.3 132.0,129.4 132.5,135.4 133.0,139.0 133.5,136.5 134.0,129.9 134.5,123.0 135.0,118.9 135.5,116.5 136.0,118.9 136.5,124.3 137.0,128.4 137.5,128.7 138.0,128.2 138.5,129.2 139.0,126.7 139.5,126.0 140.0,125.4 140.5,125.6 141.0,125.6 141.5,126.9 142.0,125.5 142.5,125.4 143.0,124.7 143.5,124.3 144.0,123.2 144.5,123.2 145.0,123.4 145.5,126.4 146.0,130.6 146.5,135.0 147.0,137.6 147.5,137.8 148.0,135.9 148.5,131.4 149.0,125.8 149.5,119.9 150.0,114.5 150.5,112.5 151.0,113.4 151.5,115.6 152.0,122.4 152.5,126.7 153.0,132.6 153.5,138.4 154.0,140.1 154.5,140.0 155.0,134.5 155.5,129.7 156.0,125.4 156.5,120.8 157.0,114.0 157.5,116.0 158.0,114.4 158.5,118.1 159.0,124.3 159.5,128.8 160.0,131.2 160.5,134.0 161.0,134.9 161.5,135.7 162.0,130.7 162.5,127.7 163.0,126.0 163.5,123.2 164.0,120.8 164.5,121.8 165.0,119.7 165.5,123.1 166.0,125.3 166.5,127.0 167.0,128.6 167.5,131.6 168.0,132.1 168.5,133.7 169.0,129.2 169.5,128.5 170.0,124.6 170.5,120.8 171.0,120.0 171.5,118.9 172.0,119.7 172.5,122.6 173.0,125.6 173.5,130.2 174.0,132.6 174.5,135.6 175.0,135.7 175.5,134.7 176.0,132.5 176.5,126.4 177.0,122.3 177.5,117.5 178.0,113.4 178.5,113.8 179.0,113.3 179.5,119.2 180.0,124.9 180.5,134.2 181.0,140.6 181.5,144.4 182.0,142.7 182.5,140.6 183.0,136.2 183.5,127.3 184.0,118.1 184.5,113.9 185.0,107.8 185.5,107.9 186.0,112.2 186.5,119.7 187.0,127.8 187.5,134.5 188.0,138.8 188.5,139.9 189.0,139.2 189.5,136.9 190.0,131.5 190.5,126.4 191.0,121.6 191.5,116.5 192.0,114.3 192.5,120.0 193.0,120.6 193.5,124.4 194.0,125.9 194.5,129.7 195.0,129.5 195.5,130.6 196.0,130.6 196.5,129.2 197.0,128.9 197.5,126.6 198.0,127.4 198.5,124.5 199.0,118.7 199.5,114.2 200.0,113.5 200.5,122.2 201.0,130.2 201.5,140.2 202.0,146.1 202.5,140.4 203.0,127.4 203.5,109.5 204.0,98.7 204.5,101.7 205.0,116.1 205.5,130.8 206.0,137.7 206.5,136.0 207.0,133.8 207.5,126.8 208.0,124.4 208.5,121.9 209.0,123.4 209.5,125.0 210.0,126.1 210.5,126.6 211.0,126.4 211.5,126.7 212.0,126.1 212.5,126.0 213.0,126.3 213.5,126.1 214.0,126.4 214.5,126.1 215.0,126.0" stroke="#008000"/><polyline points="61.0,125.7 61.5,126.4 62.0,126.0 62.5,127.1 63.0,126.9 63.5,125.7 64.0,125.2 64.5,125.0 65.0,125.5 65.5,126.3 66.0,127.2 66.5,126.8 67.0,128.1 67.5,127.9 68.0,127.0 68.5,127.1 69.0,123.3 69.5,121.4 70.0,121.0 70.5,124.8 71.0,129.0 71.5,137.1 72.0,140.7 72.5,137.9 73.0,125.6 73.5,110.8 74.0,101.2 74.5,103.6 75.0,116.3 75.5,136.1 76.0,147.3 76.5,151.5 77.0,142.4 77.5,127.9 78.0,112.1 78.5,107.7 79.0,111.1 79.5,121.5 80.0,128.2 80.5,132.8 81.0,133.7 81.5,130.3 82.0,126.1 82.5,123.5 83.0,125.1 83.5,125.3 84.0,126.0 84.5,127.3 85.0,125.8 85.5,125.9 86.0,126.0 86.5,126.7 87.0,126.6 87.5,125.0 88.0,125.8 88.5,126.0 89.0,126.9 89.5,127.0 90.0,127.4 90.5,126.3 91.0,125.6 91.5,125.7 92.0,126.3 92.5,126.2 93.0,127.3 93.5,126.8 94.0,127.2 94.5,127.5 95.0,125.3 95.5,127.3 96.0,124.7 96.5,125.5 97.0,122.2 97.5,122.2 98.0,123.9 98.5,127.0 99.0,132.0 99.5,136.0 100.0,136.9 100.5,133.1 101.0,126.5 101.5,118.7 102.0,113.8 102.5,115.8 103.0,118.0 103.5,123.1 104.0,127.5 104.5,130.8 105.0,130.8 105.5,127.8 106.0,126.1 106.5,126.7 107.0,125.1 107.5,124.6 108.0,126.0 108.5,125.5 109.0,125.9 109.5,125.6 110.0,127.6 110.5,125.4 111.0,125.0 111.5,126.5 112.0,125.1 112.5,126.5 113.0,126.9 113.5,125.7 114.0,127.0 114.5,127.1 115.0,128.5 115.5,126.7 116.0,124.8 116.5,121.8 117.0,119.2 117.5,118.6 118.0,119.3 118.5,122.2 119.0,127.8 119.5,134.6 120.0,136.7 120.5,139.7 121.0,135.5 121.5,127.1 122.0,114.5 122.5,101.9 123.0,96.9 123.5,98.4 124.0,110.1 124.5,128.4 125.0,141.0 125.5,152.6 126.0,155.0 126.5,148.5 127.0,133.8 127.5,115.4 128.0,94.4 128.5,83.5 129.0,85.3 129.5,101.0 130.0,121.9 130.5,137.0 131.0,148.2 131.5,149.4 132.0,146.2 132.5,135.5 133.0,124.3 133.5,111.1 134.0,104.1 134.5,104.6 135.0,111.3 135.5,121.9 136.0,128.9 136.5,133.0 137.0,133.8 137.5,134.1 138.0,130.7 138.5,127.0 139.0,122.5 139.5,121.6 140.0,122.9 140.5,123.9 141.0,124.5 141.5,125.1 142.0,125.3 142.5,126.9 143.0,126.7 143.5,126.9 144.0,127.9 144.5,127.5 145.0,129.3 145.5,129.4 146.0,127.1 146.5,124.9 147.0,123.7 147.5,123.5 148.0,123.1 148.5,122.7 149.0,123.4 149.5,125.9 150.0,126.6 150.5,130.0 151.0,129.4 151.5,128.4 152.0,127.7 152.5,126.6 153.0,124.3 153.5,124.5 154.0,122.8 154.5,123.7 155.0,123.8 155.5,125.8 156.0,127.3 156.5,127.4 157.0,129.3 157.5,130.6 158.0,129.1 158.5,127.4 159.0,125.3 159.5,123.4 160.0,123.7 160.5,121.7 161.0,121.8 161.5,122.9 162.0,125.1 162.5,127.8 163.0,130.2 163.5,131.9 164.0,132.8 164.5,130.4 165.0,126.9 165.5,125.1 166.0,120.7 166.5,121.1 167.0,119.2 167.5,121.6 168.0,122.8 168.5,127.3 169.0,131.7 169.5,134.2 170.0,134.2 170.5,133.9 171.0,132.0 171.5,125.7 172.0,124.9 172.5,121.7 173.0,119.9 173.5,120.5 174.0,122.8 174.5,124.6 175.0,127.2 175.5,131.0 176.0,133.4 176.5,131.6 177.0,131.1 177.5,129.0 178.0,125.5 178.5,124.1 179.0,122.5 179.5,120.6 180.0,123.0 180.5,123.7 181.0,125.0 181.5,127.1 182.0,129.4 182.5,129.5 183.0,128.9 183.5,129.2 184.0,127.1 184.5,124.3 185.0,122.2 185.5,122.1 186.0,122.9 186.5,123.4 187.0,124.8 187.5,126.3 188.0,129.8 188.5,130.9 189.0,131.1 189.5,129.8 190.0,129.8 190.5,126.2 191.0,123.7 191.5,122.0 192.0,120.7 192.5,120.7 193.0,124.4 193.5,124.9 194.0,128.8 194.5,131.8 195.0,130.8 195.5,130.5 196.0,128.8 196.5,128.0 197.0,127.6 197.5,124.0 198.0,123.5 198.5,119.9 199.0,115.9 199.5,116.4 200.0,124.0 200.5,131.5 201.0,140.1 201.5,144.1 202.0,138.7 202.5,127.9 203.0,110.4 203.5,99.9 204.0,100.8 204.5,111.2 205.0,126.7 205.5,135.1 206.0,136.9 206.5,134.2 207.0,128.8 207.5,124.9 208.0,121.1 208.5,122.3 209.0,124.1 209.5,125.7 210.0,126.8 210.5,127.0 211.0,126.8 211.5,126.5 212.0,126.3 212.5,126.1 213.0,126.0 213.5,126.5 214.0,126.2 214.5,126.2 215.0,126.3" stroke="#800000"/><polyline points="61.0,126.5 61.5,126.1 62.0,125.6 62.5,126.3 63.0,126.9 63.5,127.6 64.0,125.4 64.5,125.1 65.0,127.4 65.5,125.3 66.0,125.5 66.5,127.4 67.0,125.7 67.5,127.0 68.0,125.8 68.5,124.3 69.0,124.9 69.5,125.6 70.0,129.7 70.5,133.5 71.0,136.5 71.5,133.5 72.0,123.6 72.5,106.7 73.0,89.4 73.5,88.6 74.0,105.1 74.5,138.9 75.0,174.0 75.5,197.2 76.0,192.2 76.5,155.2 77.0,101.1 77.5,49.8 78.0,34.4 78.5,54.6 79.0,103.1 79.5,150.1 80.0,179.4 80.5,182.6 81.0,163.4 81.5,135.3 82.0,112.0 82.5,102.2 83.0,104.7 83.5,114.3 84.0,123.4 84.5,129.0 85.0,130.9 85.5,131.1 86.0,128.6 86.5,127.4 87.0,125.0 87.5,126.2 88.0,126.2 88.5,126.7 89.0,125.2 89.5,126.6 90.0,126.5 90.5,126.2 91.0,125.7 91.5,126.6 92.0,127.4 92.5,125.8 93.0,126.6 93.5,128.0 94.0,126.0 94.5,126.2 95.0,125.7 95.5,123.3 96.0,120.1 96.5,118.8 97.0,118.6 97.5,126.0 98.0,139.9 98.5,152.6 99.0,160.2 99.5,152.0 100.0,133.4 100.5,108.7 101.0,90.7 101.5,83.5 102.0,94.2 102.5,112.0 103.0,132.2 103.5,142.3 104.0,143.6 104.5,139.6 105.0,130.8 105.5,127.3 106.0,123.0 106.5,124.3 107.0,125.2 107.5,124.7 108.0,125.4 108.5,127.5 109.0,127.4 109.5,126.6 110.0,125.4 110.5,124.4 111.0,124.7 111.5,126.5 112.0,126.6 112.5,126.4 113.0,129.0 113.5,129.3 114.0,129.9 114.5,129.3 115.0,126.2 115.5,121.1 116.0,115.1 116.5,114.4 117.0,117.0 117.5,122.9 118.0,130.8 118.5,138.4 119.0,142.9 119.5,143.2 120.0,136.1 120.5,122.8 121.0,101.0 121.5,84.4 122.0,78.0 122.5,86.7 123.0,111.4 123.5,139.0 124.0,158.5 124.5,170.8 125.0,170.4 125.5,153.3 126.0,127.2 126.5,87.6 127.0,60.1 127.5,51.9 128.0,68.6 128.5,102.6 129.0,136.8 129.5,159.5 130.0,169.6 130.5,166.6 131.0,151.4 131.5,129.8 132.0,101.9 132.5,83.9 133.0,82.0 133.5,93.6 134.0,111.6 134.5,128.7 135.0,140.4 135.5,144.1 136.0,141.8 136.5,136.0 137.0,128.5 137.5,120.0 138.0,116.3 138.5,116.1 139.0,118.7 139.5,122.6 140.0,126.6 140.5,127.8 141.0,127.7 141.5,127.9 142.0,127.2 142.5,127.8 143.0,126.3 143.5,124.6 144.0,125.2 144.5,124.5 145.0,124.1 145.5,124.0 146.0,124.0 146.5,126.5 147.0,128.2 147.5,127.7 148.0,129.4 148.5,129.1 149.0,129.3 149.5,128.6 150.0,127.9 150.5,126.2 151.0,124.5 151.5,124.1 152.0,121.9 152.5,123.8 153.0,124.5 153.5,127.2 154.0,127.7 154.5,129.3 155.0,131.6 155.5,129.6 156.0,131.6 156.5,127.9 157.0,125.0 157.5,123.5 158.0,121.6 158.5,118.5 159.0,120.0 159.5,121.7 160.0,123.7 160.5,128.7 161.0,130.7 161.5,131.9 162.0,136.4 162.5,135.9 163.0,131.8 163.5,127.7 164.0,123.0 164.5,120.4 165.0,117.3 165.5,117.4 166.0,118.1 166.5,122.7 167.0,125.3 167.5,128.3 168.0,132.0 168.5,133.9 169.0,135.3 169.5,132.3 170.0,129.2 170.5,125.4 171.0,122.5 171.5,120.0 172.0,121.2 172.5,120.5 173.0,120.6 173.5,125.3 174.0,127.9 174.5,129.2 175.0,132.3 175.5,131.0 176.0,131.7 176.5,129.4 177.0,126.4 177.5,126.3 178.0,124.1 178.5,123.8 179.0,121.5 179.5,123.7 180.0,123.5 180.5,126.4 181.0,127.2 181.5,130.3 182.0,131.6 182.5,129.6 183.0,130.4 183.5,127.3 184.0,126.7 184.5,125.3 185.0,123.0 185.5,121.3 186.0,119.4 186.5,122.0 187.0,124.6 187.5,126.2 188.0,130.6 188.5,131.1 189.0,134.4 189.5,133.8 190.0,133.4 190.5,128.5 191.0,125.6 191.5,120.6 192.0,117.9 192.5,119.0 193.0,116.6 193.5,121.9 194.0,125.8 194.5,127.6 195.0,130.8 195.5,134.9 196.0,133.9 196.5,128.3 197.0,123.3 197.5,117.0 198.0,112.4 198.5,113.6 199.0,121.7 199.5,135.1 200.0,152.1 200.5,163.4 201.0,163.5 201.5,151.7 202.0,128.8 202.5,90.4 203.0,61.5 203.5,50.4 204.0,65.9 204.5,95.4 205.0,127.1 205.5,144.6 206.0,152.0 206.5,149.9 207.0,142.8 207.5,131.3 208.0,125.0 208.5,120.1 209.0,120.8 209.5,122.1 210.0,124.1 210.5,125.6 211.0,126.4 211.5,126.3 212.0,126.3 212.5,126.6 213.0,126.6 213.5,126.1 214.0,126.2 214.5,126.0 215.0,126.4" stroke="#000080"/><polyline points="61.0,125.9 61.5,126.6 62.0,127.1 62.5,126.7 63.0,127.5 63.5,127.2 64.0,125.4 64.5,127.3 65.0,127.0 65.5,125.4 66.0,127.6 66.5,126.6 67.0,125.8 67.5,128.0 68.0,127.4 68.5,128.0 69.0,127.0 69.5,124.1 70.0,122.0 70.5,119.9 71.0,118.0 71.5,121.3 72.0,128.2 72.5,137.5 73.0,146.2 73.5,152.1 74.0,151.2 74.5,142.3 75.0,124.1 75.5,103.3 76.0,86.5 76.5,79.1 77.0,87.0 77.5,105.7 78.0,129.4 78.5,147.5 79.0,157.7 79.5,155.0 80.0,147.1 80.5,136.5 81.0,124.8 81.5,117.2 82.0,115.2 82.5,116.7 83.0,119.2 83.5,123.0 84.0,127.1 84.5,128.7 85.0,129.0 85.5,126.8 86.0,127.7 86.5,126.0 87.0,126.4 87.5,126.3 88.0,125.1 88.5,126.1 89.0,125.2 89.5,126.5 90.0,126.8 90.5,125.9 91.0,126.2 91.5,127.6 92.0,125.8 92.5,125.4 93.0,125.2 93.5,126.0 94.0,127.2 94.5,127.5 95.0,126.0 95.5,125.8 96.0,127.3 96.5,122.9 97.0,121.2 97.5,121.4 98.0,121.8 98.5,128.5 99.0,136.8 99.5,140.4 100.0,139.6 100.5,133.5 101.0,120.7 101.5,112.6 102.0,111.1 102.5,115.1 103.0,121.5 103.5,130.5 104.0,131.9 104.5,132.9 105.0,130.8 105.5,126.8 106.0,126.2 106.5,125.2 107.0,125.1 107.5,124.9 108.0,127.3 108.5,127.6 109.0,127.0 109.5,127.1 110.0,125.2 110.5,125.9 111.0,125.2 111.5,127.1 112.0,127.1 112.5,125.5 113.0,127.7 113.5,127.1 114.0,127.9 114.5,126.0 115.0,125.1 115.5,122.9 116.0,121.4 116.5,121.0 117.0,120.7 117.5,121.1 118.0,126.1 118.5,131.1 119.0,134.6 119.5,136.8 120.0,137.0 120.5,133.8 121.0,125.9 121.5,114.0 122.0,103.8 122.5,97.9 123.0,98.9 123.5,110.5 124.0,124.8 124.5,139.9 125.0,150.4 125.5,153.0 126.0,150.9 126.5,141.0 127.0,126.4 127.5,105.7 128.0,90.2 128.5,81.6 129.0,87.5 129.5,102.5 130.0,123.8 130.5,138.4 131.0,147.3 131.5,149.6 132.0,146.8 132.5,137.6 133.0,127.0 133.5,115.6 134.0,107.6 134.5,104.7 135.0,108.7 135.5,116.4 136.0,125.2 136.5,130.6 137.0,132.5 137.5,134.0 138.0,131.1 138.5,130.0 139.0,125.6 139.5,123.6 140.0,122.6 140.5,121.7 141.0,125.2 141.5,124.7 142.0,126.2 142.5,125.7 143.0,127.2 143.5,125.4 144.0,123.7 144.5,123.2 145.0,124.0 145.5,123.4 146.0,125.7 146.5,129.6 147.0,135.1 147.5,136.2 148.0,136.3 148.5,134.7 149.0,132.4 149.5,127.6 150.0,122.6 150.5,118.0 151.0,117.8 151.5,115.2 152.0,117.7 152.5,120.1 153.0,125.0 153.5,129.4 154.0,134.0 154.5,136.2 155.0,138.9 155.5,134.3 156.0,132.5 156.5,130.4 157.0,126.0 157.5,124.2 158.0,120.4 158.5,118.4 159.0,118.5 159.5,119.4 160.0,121.9 160.5,125.3 161.0,127.1 161.5,131.7 162.0,132.1 162.5,133.0 163.0,130.1 163.5,129.4 164.0,127.8 164.5,124.5 165.0,123.2 165.5,122.1 166.0,122.6 166.5,120.9 167.0,124.0 167.5,123.6 168.0,126.7 168.5,127.6 169.0,130.1 169.5,131.6 170.0,130.3 170.5,132.8 171.0,128.4 171.5,126.7 172.0,125.3 172.5,120.4 173.0,119.1 173.5,116.6 174.0,118.7 174.5,120.2 175.0,124.1 175.5,126.4 176.0,131.3 176.5,133.8 177.0,137.6 177.5,137.0 178.0,135.1 178.5,130.7 179.0,126.9 179.5,122.0 180.0,118.4 180.5,112.1 181.0,110.2 181.5,114.4 182.0,116.7 182.5,123.7 183.0,130.0 183.5,135.5 184.0,140.2 184.5,142.5 185.0,138.3 185.5,136.9 186.0,130.6 186.5,124.6 187.0,121.0 187.5,116.9 188.0,113.0 188.5,115.8 189.0,117.4 189.5,121.4 190.0,123.7 190.5,128.8 191.0,131.7 191.5,134.4 192.0,135.0 192.5,132.5 193.0,129.9 193.5,126.2 194.0,120.9 194.5,114.2 195.0,112.5 195.5,116.9 196.0,130.3 196.5,148.6 197.0,164.2 197.5,165.7 198.0,145.5 198.5,92.3 199.0,26.7 199.5,13.0 200.0,13.0 200.5,75.2 201.0,160.7 201.5,207.0 202.0,207.0 202.5,207.0 203.0,157.6 203.5,98.3 204.0,58.6 204.5,57.2 205.0,82.2 205.5,112.2 206.0,130.2 206.5,136.3 207.0,137.0 207.5,131.5 208.0,126.9 208.5,126.5 209.0,125.2 209.5,125.3 210.0,126.0 210.5,125.9 211.0,126.0 211.5,126.6 212.0,126.5 212.5,126.2 213.0,126.4 213.5,126.4 214.0,126.5 214.5,126.4 215.0,126.0" stroke="#008080"/><polyline points="61.0,125.3 61.5,127.0 62.0,127.2 62.5,126.9 63.0,127.0 63.5,126.9 64.0,127.3 64.5,126.4 65.0,125.8 65.5,126.9 66.0,125.4 66.5,126.3 67.0,127.2 67.5,126.8 68.0,128.0 68.5,127.1 69.0,125.8 69.5,123.2 70.0,120.8 70.5,119.3 71.0,121.8 71.5,126.4 72.0,134.3 72.5,141.7 73.0,145.1 73.5,138.2 74.0,123.5 74.5,106.4 75.0,95.3 75.5,97.3 76.0,111.5 76.5,130.9 77.0,146.6 77.5,153.3 78.0,147.6 78.5,133.5 79.0,119.0 79.5,111.4 80.0,110.9 80.5,117.1 81.0,124.5 81.5,128.0 82.0,130.5 82.5,130.4 83.0,128.0 83.5,127.5 84.0,126.6 84.5,124.8 85.0,125.3 85.5,126.8 86.0,126.9 86.5,127.5 87.0,127.2 87.5,126.5 88.0,125.5 88.5,127.3 89.0,126.8 89.5,126.3 90.0,127.4 90.5,125.3 91.0,125.7 91.5,126.0 92.0,126.8 92.5,125.8 93.0,124.5 93.5,125.7 94.0,127.4 94.5,127.4 95.0,130.3 95.5,129.5 96.0,127.1 96.5,123.8 97.0,118.1 97.5,115.1 98.0,115.8 98.5,122.0 99.0,129.8 99.5,135.9 100.0,137.0 100.5,135.4 101.0,128.7 101.5,123.6 102.0,122.4 102.5,121.4 103.0,123.0 103.5,125.9 104.0,126.7 104.5,127.2 105.0,127.1 105.5,125.5 106.0,125.3 106.5,127.6 107.0,125.1 107.5,126.6 108.0,125.2 108.5,125.9 109.0,125.2 109.5,126.2 110.0,127.0 110.5,126.3 111.0,127.7 111.5,127.5 112.0,126.4 112.5,125.7 113.0,124.9 113.5,126.1 114.0,127.8 114.5,128.3 115.0,128.1 115.5,128.8 116.0,127.5 116.5,122.8 117.0,119.1 117.5,119.5 118.0,121.7 118.5,127.2 119.0,133.3 119.5,134.9 120.0,132.7 120.5,128.2 121.0,115.8 121.5,106.8 122.0,106.6 122.5,115.1 123.0,130.7 123.5,140.7 124.0,145.1 124.5,141.5 125.0,128.0 125.5,110.6 126.0,97.0 126.5,98.0 127.0,110.9 127.5,130.3 128.0,142.2 128.5,145.9 129.0,140.3 129.5,128.4 130.0,114.0 130.5,102.9 131.0,104.0 131.5,117.0 132.0,129.9 132.5,136.2 133.0,136.3 133.5,134.4 134.0,127.4 134.5,119.3 135.0,115.8 135.5,117.5 136.0,123.5 136.5,126.8 137.0,129.0 137.5,130.5 138.0,129.3 138.5,125.6 139.0,125.7 139.5,124.1 140.0,124.9 140.5,125.6 141.0,125.0 141.5,126.7 142.0,126.2 142.5,125.3 143.0,125.4 143.5,126.2 144.0,127.6 144.5,129.9 145.0,130.9 145.5,132.2 146.0,134.2 146.5,133.4 147.0,131.3 147.5,128.3 148.0,125.2 148.5,120.7 149.0,119.0 149.5,119.2 150.0,117.9 150.5,117.3 151.0,123.4 151.5,125.5 152.0,127.5 152.5,129.7 153.0,130.4 153.5,134.7 154.0,131.4 154.5,132.1 155.0,129.1 155.5,129.1 156.0,127.3 156.5,124.8 157.0,121.5 157.5,122.6 158.0,122.6 158.5,123.6 159.0,124.7 159.5,123.2 160.0,126.4 160.5,126.9 161.0,127.9 161.5,131.2 162.0,129.5 162.5,128.9 163.0,129.3 163.5,128.5 164.0,127.6 164.5,125.0 165.0,122.3 165.5,121.3 166.0,119.5 166.5,121.2 167.0,121.1 167.5,122.5 168.0,125.8 168.5,128.5 169.0,131.2 169.5,134.3 170.0,133.4 170.5,135.2 171.0,132.7 171.5,130.4 172.0,129.1 172.5,125.8 173.0,123.1 173.5,118.1 174.0,115.9 174.5,116.0 175.0,117.9 175.5,120.1 176.0,121.7 176.5,127.6 177.0,131.3 177.5,133.4 178.0,136.3 178.5,138.6 179.0,137.7 179.5,134.7 180.0,131.4 180.5,126.2 181.0,123.8 181.5,120.4 182.0,116.4 182.5,118.1 183.0,116.3 183.5,118.4 184.0,122.4 184.5,125.4 185.0,127.2 185.5,129.9 186.0,134.1 186.5,135.9 187.0,132.5 187.5,131.4 188.0,129.8 188.5,127.3 189.0,124.9 189.5,123.9 190.0,121.0 190.5,121.6 191.0,122.4 191.5,120.8 192.0,123.1 192.5,124.7 193.0,125.6 193.5,128.0 194.0,129.4 194.5,131.0 195.0,129.7 195.5,131.3 196.0,130.3 196.5,127.7 197.0,128.7 197.5,125.2 198.0,123.9 198.5,118.5 199.0,115.9 199.5,113.6 200.0,116.1 200.5,125.1 201.0,135.7 201.5,147.9 202.0,155.9 202.5,155.5 203.0,145.0 203.5,127.7 204.0,101.4 204.5,87.6 205.0,84.7 205.5,95.0 206.0,110.4 206.5,127.8 207.0,136.1 207.5,138.2 208.0,136.4 208.5,131.9 209.0,128.3 209.5,125.4 210.0,124.4 210.5,124.4 211.0,125.0 211.5,125.9 212.0,126.4 212.5,126.6 213.0,126.3 213.5,126.3 214.0,126.4 214.5,126.4 215.0,126.3" stroke="#800080"/><path d="M208.5,126.500 H215" stroke="#7ab8f0"/></g>
  <rect x="245.500" y="10.500" width="69" height="219" fill="none" stroke="#8e8e8e" stroke-width="1"/>
  <g id="legend" font-family="Liberation Serif,serif" font-size="13.400" fill="#fff"><line x1="249.500" y1="20.5" x2="271.500" y2="20.5" stroke="#18e018" stroke-width="1.600"/><text transform="translate(275,24.9) scale(.885,1)">Plot 1</text><line x1="249.500" y1="38.5" x2="271.500" y2="38.5" stroke="#d80828" stroke-width="1.600"/><text transform="translate(275,42.9) scale(.885,1)">Plot 2</text><line x1="249.500" y1="56.5" x2="271.500" y2="56.5" stroke="#1808d8" stroke-width="1.600"/><text transform="translate(275,60.9) scale(.885,1)">Plot 3</text><line x1="249.500" y1="74.5" x2="271.500" y2="74.5" stroke="#18d8d8" stroke-width="1.600"/><text transform="translate(275,78.9) scale(.885,1)">Plot 4</text><line x1="249.500" y1="92.5" x2="271.500" y2="92.5" stroke="#d818d8" stroke-width="1.600"/><text transform="translate(275,96.9) scale(.885,1)">Plot 5</text><line x1="249.500" y1="110.5" x2="271.500" y2="110.5" stroke="#e8e818" stroke-width="1.600"/><text transform="translate(275,114.9) scale(.885,1)">Plot 6</text><line x1="249.500" y1="128.5" x2="271.500" y2="128.5" stroke="#f0f0f0" stroke-width="1.600"/><text transform="translate(275,132.9) scale(.885,1)">Plot 7</text><line x1="249.500" y1="146.5" x2="271.500" y2="146.5" stroke="#087808" stroke-width="1.600"/><text transform="translate(275,150.9) scale(.885,1)">Plot 8</text><line x1="249.500" y1="164.5" x2="271.500" y2="164.5" stroke="#780818" stroke-width="1.600"/><text transform="translate(275,168.9) scale(.885,1)">Plot 9</text><line x1="249.500" y1="182.5" x2="271.500" y2="182.5" stroke="#080878" stroke-width="1.600"/><text transform="translate(275,186.9) scale(.885,1)">Plot 10</text><line x1="249.500" y1="200.5" x2="271.500" y2="200.5" stroke="#087878" stroke-width="1.600"/><text transform="translate(275,204.9) scale(.885,1)">Plot 11</text><line x1="249.500" y1="218.5" x2="271.500" y2="218.5" stroke="#780878" stroke-width="1.600"/><text transform="translate(275,222.9) scale(.885,1)">Plot 12</text></g>
  <text x="2.500" y="14.800" font-family="Liberation Sans,sans-serif" font-size="13.600" fill="#e4001c">Display FPS limited to 5</text>
  <g font-family="Liberation Sans,sans-serif" font-size="12.500" fill="#d0d0d0">
    <text transform="translate(54,212.300) scale(.86,1)" text-anchor="end">-387.744</text>
    <text transform="translate(58.600,231.700) scale(.86,1)" text-anchor="middle">0</text>
    <text transform="translate(215.700,231.700) scale(.86,1)" text-anchor="middle">10</text>
  </g>
</svg>
</div>

<!-- fields -->
<div class="abs fld" style="left:41px;top:353px;width:257px;height:33px;">Local mode</div>
<div class="abs fld" style="left:305px;top:353px;width:286px;height:33px;">trial_001</div>
<div class="abs fld" style="left:41px;top:393px;width:257px;height:33px;">Recording</div>
<div class="abs fld" style="left:305px;top:393px;width:287px;height:33px;">0000:00:16.640</div>
<div class="abs fld" style="left:41px;top:465px;width:127px;height:33px;">49.95</div>
<div class="abs fld" style="left:177px;top:465px;width:127px;height:33px;">49.95</div>
<div class="abs fld" style="left:41px;top:513px;width:127px;height:33px;padding-top:1px;">49.95</div>
<div class="abs fld" style="left:177px;top:513px;width:127px;height:33px;padding-top:1px;">49.95</div>
</body></html>
